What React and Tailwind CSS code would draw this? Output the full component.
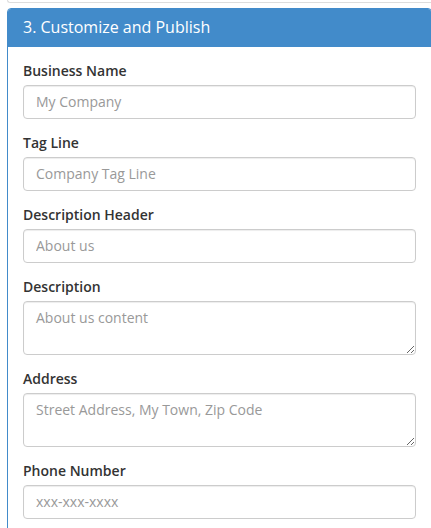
export default function App() {
  const fields = [
    { label: 'Business Name', placeholder: 'My Company' },
    { label: 'Tag Line', placeholder: 'Company Tag Line' },
    { label: 'Description Header', placeholder: 'About us' },
    { label: 'Description', placeholder: 'About us content', area: true },
    { label: 'Address', placeholder: 'Street Address, My Town, Zip Code', area: true },
    { label: 'Phone Number', placeholder: 'xxx-xxx-xxxx' },
  ]

  return (
    <div
      className="h-[528px] w-[431px] overflow-hidden bg-white text-[#333] text-[14px] leading-[20px]"
      style={{ fontFamily: '"Open Sans", "Liberation Sans", sans-serif' }}
    >
      <div className="ml-[7px] w-[430px] h-[3px] bg-white border-l border-b border-[#ddd] rounded-bl-[4px]" />

      <div className="mt-[5px] ml-[7px] w-[425px] border border-[#428bca] rounded-t-[4px] bg-white">
        <div className="bg-[#428bca] px-[15px] py-[10px] rounded-t-[3px]">
          <h3 className="text-[16px] leading-[17.6px] text-white m-0">3. Customize and Publish</h3>
        </div>
        <div className="p-[15px]">
          {fields.map((f) => (
            <div key={f.label} className="mb-[15px]">
              <label className="block mb-[5px] font-semibold leading-[18px]">{f.label}</label>
              {f.area ? (
                <textarea
                  rows={2}
                  placeholder={f.placeholder}
                  className="block w-full h-[54px] px-[12px] py-[6px] border border-[#ccc] rounded-[4px] text-[14px] leading-[20px] placeholder:text-[#999] shadow-[inset_0_1px_1px_rgba(0,0,0,0.075)] outline-none"
                />
              ) : (
                <input
                  type="text"
                  placeholder={f.placeholder}
                  className="block w-full h-[34px] px-[12px] py-[6px] border border-[#ccc] rounded-[4px] text-[14px] leading-[20px] placeholder:text-[#999] shadow-[inset_0_1px_1px_rgba(0,0,0,0.075)] outline-none"
                />
              )}
            </div>
          ))}
        </div>
      </div>
    </div>
  )
}
